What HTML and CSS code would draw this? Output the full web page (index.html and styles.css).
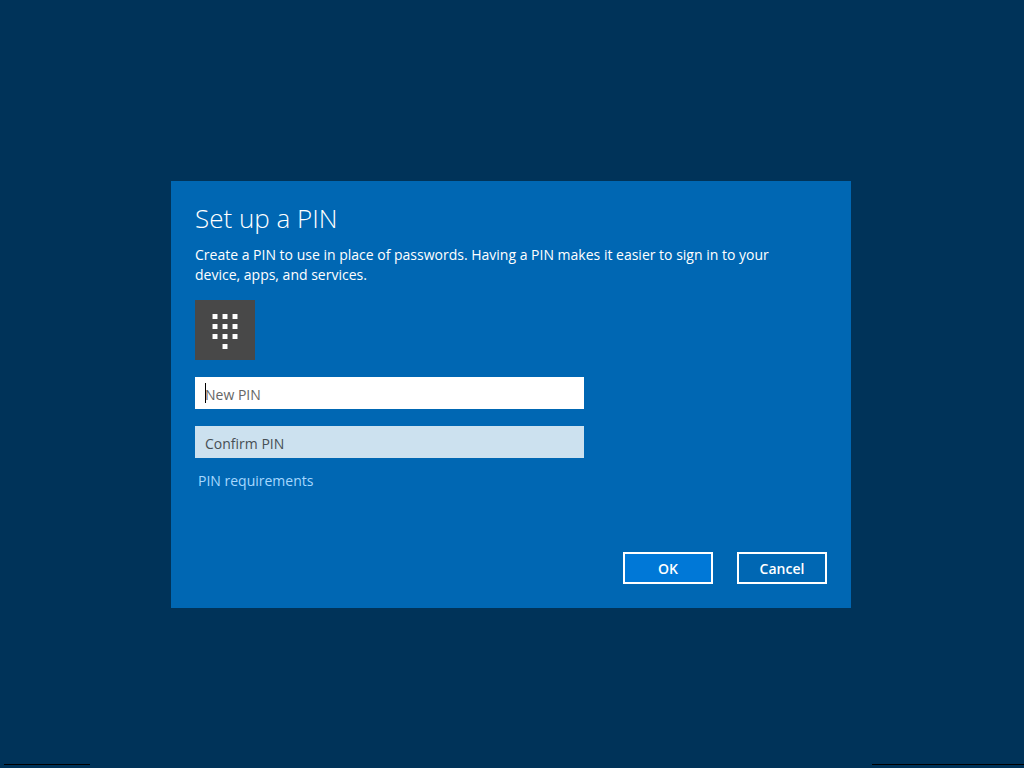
FILE: index.html
```
<!DOCTYPE html>
<html lang="en">
<head>
<meta charset="utf-8">
<meta name="viewport" content="width=device-width, initial-scale=1">
<title>Set up a PIN</title>
<link rel="stylesheet" href="styles.css">
</head>
<body class="screen">
<main class="stage">
  <form class="dialog">
    <h1 class="title">Set up a PIN</h1>
    <p class="intro">Create a PIN to use in place of passwords. Having a PIN makes it easier to sign in to your device, apps, and services.</p>
    <svg class="keypad" viewBox="0 0 60 60" aria-hidden="true">
      <rect width="60" height="60" fill="#484848"/>
      <path fill="#a0a0a0" d="M17 14h6v5h-6zM27 14h6v5h-6zM37 14h6v5h-6zM17 24h6v5h-6zM27 24h6v5h-6zM37 24h6v5h-6zM17 34h6v5h-6zM27 34h6v5h-6zM37 34h6v5h-6zM27 44h6v5h-6z"/>
      <path fill="#fff" d="M18 14h4v5h-4zM28 14h4v5h-4zM38 14h4v5h-4zM18 24h4v5h-4zM28 24h4v5h-4zM38 24h4v5h-4zM18 34h4v5h-4zM28 34h4v5h-4zM38 34h4v5h-4zM28 44h4v5h-4z"/>
    </svg>
    <div class="field">
      <input class="pin pin-active" type="password" placeholder="New PIN" aria-label="New PIN">
      <span class="caret"></span>
    </div>
    <div class="field">
      <input class="pin" type="password" placeholder="Confirm PIN" aria-label="Confirm PIN">
    </div>
    <a class="link" href="#">PIN requirements</a>
    <div class="actions">
      <button class="btn btn-primary" type="button">OK</button>
      <button class="btn" type="button">Cancel</button>
    </div>
  </form>
</main>
<footer class="edge"><span class="line line-left"></span><span class="line line-right"></span></footer>
</body>
</html>
```
FILE: styles.css
```
* { box-sizing: border-box; }
.screen {
  margin: 0;
  min-height: 100vh;
  display: grid;
  grid-template-rows: 1fr auto;
  background: #003359;
  color: #fff;
  font-family: "Segoe UI", "Open Sans", "Noto Sans", sans-serif;
  font-size: 14px;
  line-height: 20px;
}
.stage {
  display: flex;
  align-items: center;
  justify-content: center;
  padding: 25px 2px 0 0;
}
.dialog {
  width: 100%;
  max-width: 680px;
  padding: 20px 24px 24px;
  background: #0067b3;
  display: flex;
  flex-direction: column;
  align-items: flex-start;
}
.title {
  margin: 0 0 10px;
  font-size: 26px;
  line-height: 34px;
  font-weight: 300;
}
.intro { margin: 0 0 15px; max-width: 580px; }
.keypad { display: block; width: 60px; height: 60px; margin-bottom: 17px; }
.field {
  position: relative;
  width: 100%;
  max-width: 389px;
  margin-bottom: 17px;
}
.pin {
  display: block;
  width: 100%;
  height: 32px;
  padding: 2px 10px 0;
  border: 0;
  border-radius: 0;
  outline: 0;
  background: #cce1ef;
  color: #333;
  font: inherit;
}
.pin::placeholder { color: #474f54; opacity: 1; }
.pin-active { background: #fff; }
.pin-active::placeholder { color: #666; }
.caret {
  position: absolute;
  left: 10px;
  top: 6px;
  width: 1px;
  height: 20px;
  background: #000;
}
.link {
  margin: -4px 0 0 3px;
  color: #a6d8ff;
  text-decoration: none;
}
.actions {
  display: flex;
  gap: 24px;
  margin-top: 61px;
  align-self: flex-end;
}
.btn {
  width: 90px;
  height: 32px;
  padding: 2px 0 0;
  border: 2px solid #fff;
  background: transparent;
  color: #fff;
  font: inherit;
  font-weight: 600;
}
.btn-primary { background: #0078d7; }
.edge {
  display: flex;
  justify-content: space-between;
  height: 4px;
  padding-left: 4px;
}
.line { height: 1px; background: #000; }
.line-left { width: 86px; }
.line-right { width: 152px; }
```
